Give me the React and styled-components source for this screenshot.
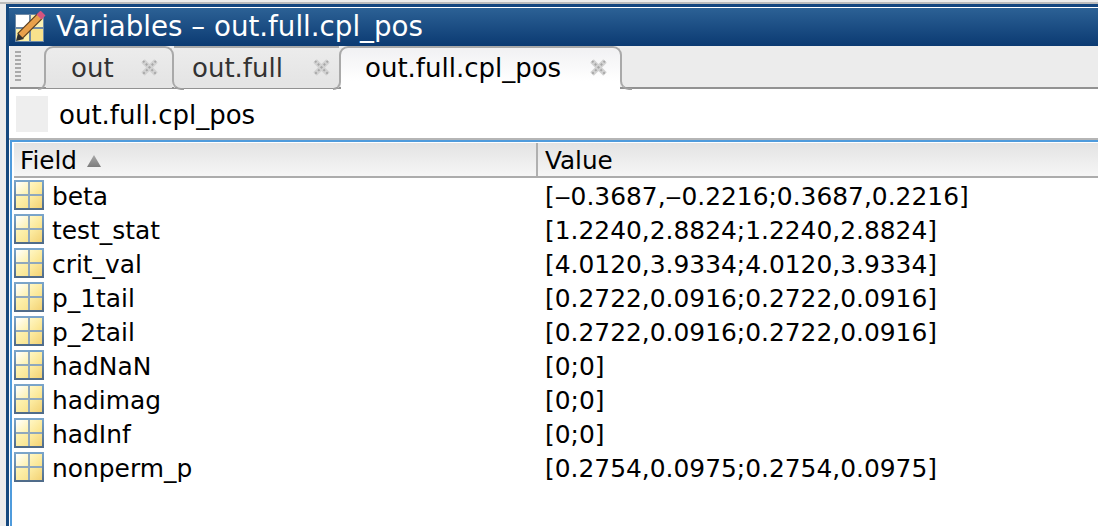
import React from "react";
import styled, { createGlobalStyle } from "styled-components";

const Global = createGlobalStyle`
  html, body {
    margin: 0;
    padding: 0;
    background: #f4f4f4;
  }
  body {
    font-family: "DejaVu Sans", "Liberation Sans", sans-serif;
  }
`;

const Frame = styled.div`
  width: 1098px;
  height: 526px;
  overflow: hidden;
  display: flex;
  background: #ececec;
  box-sizing: border-box;
  padding: 2px 0 0 6px;
`;

const Main = styled.div`
  flex: 1;
  min-width: 0;
  display: flex;
  flex-direction: column;
  background: #fff;
  border-left: 3px solid #16497f;
`;

const TopEdge = styled.div`
  height: 2px;
  flex: none;
  margin-left: -9px;
  background: #bcbcbc;
`;

const TitleBar = styled.div`
  height: 42px;
  flex: none;
  box-sizing: border-box;
  border-top: 3px solid #12457f;
  display: flex;
  align-items: center;
  gap: 10px;
  padding: 0 0 0 5px;
  color: #fff;
  font-size: 27.7px;
  white-space: nowrap;
  background: linear-gradient(#fff 0 1px, #2c6195 1px, #0b3a72 100%);
`;

const TabBar = styled.div`
  height: 43px;
  flex: none;
  margin-left: 1px;
  box-sizing: border-box;
  display: flex;
  align-items: flex-start;
  background: #ececec;
  border-bottom: 2px solid #929292;
`;

const Grip = styled.div`
  width: 6px;
  height: 30px;
  margin: 5px 23px 0 5px;
  background: repeating-linear-gradient(#aaaaaa 0 2px, #ececec 2px 4px);
`;

const Tab = styled.div`
  position: relative;
  width: ${(p) => p.$w}px;
  height: 35px;
  box-sizing: border-box;
  display: flex;
  align-items: center;
  justify-content: space-between;
  padding: 6px ${(p) => p.$pr}px 0 ${(p) => p.$pl}px;
  font-size: 26px;
  white-space: nowrap;
  color: ${(p) => (p.$active ? "#000" : "#333")};
  border-top: 2px solid #a9a9a9;
  border-left: ${(p) => (p.$flareLeft ? "2px solid #a9a9a9" : "none")};
  border-right: ${(p) => (p.$flareRight ? "2px solid #a9a9a9" : "none")};
  border-radius: ${(p) => (p.$flareLeft ? "9px" : "0")} ${(p) => (p.$flareRight ? "9px" : "0")} 0 0;
  background: ${(p) =>
    p.$active
      ? "linear-gradient(#f1f1f3, #ffffff)"
      : "linear-gradient(#ececec, #e5e5e5)"};

  &::before {
    content: "";
    position: absolute;
    left: 0;
    right: 0;
    top: 100%;
    height: ${(p) => (p.$active ? 9 : 7)}px;
    background: ${(p) => (p.$active ? "#ffffff" : "#e5e5e5")};
  }

  &::after {
    content: "";
    display: ${(p) => (p.$flareRight ? "block" : "none")};
    position: absolute;
    z-index: 2;
    left: 100%;
    top: 100%;
    width: 12px;
    height: 9px;
    box-sizing: border-box;
    border-left: 2px solid #a9a9a9;
    border-bottom: 2px solid #a0a0a0;
    border-bottom-left-radius: 9px;
  }
`;

const TabLabel = styled.span`
  position: relative;
  z-index: 1;
`;

const LeftFlare = styled.span`
  position: absolute;
  z-index: 2;
  right: 100%;
  top: 100%;
  width: 8px;
  height: 9px;
  box-sizing: border-box;
  border-right: 2px solid #a9a9a9;
  border-bottom: 2px solid #a0a0a0;
  border-bottom-right-radius: 8px;
`;

const Toolbar = styled.div`
  height: 51px;
  flex: none;
  box-sizing: border-box;
  display: flex;
  align-items: center;
  gap: 11px;
  padding: 0 0 0 7px;
  font-size: 26px;
  color: #000;
  border-bottom: 2px solid #b5b5b5;
`;

const Swatch = styled.div`
  width: 32px;
  height: 36px;
  background: #eeeeee;
`;

const ToolbarLabel = styled.span`
  padding-top: 2px;
`;

const TablePanel = styled.div`
  flex: 1;
  margin-left: 1px;
  padding: 1px 0 0 2px;
  border-top: 2px solid #4f9bdc;
  border-left: 2px solid #4f9bdc;
`;

const HeaderRow = styled.div`
  height: 35px;
  box-sizing: border-box;
  display: grid;
  grid-template-columns: 522px 1fr;
  background: linear-gradient(#e3e3e3, #f6f6f6);
  border-bottom: 2px solid #acacac;
  font-size: 24.7px;
  color: #000;
`;

const HeaderCell = styled.div`
  display: flex;
  align-items: center;
  gap: 10px;
  padding-top: 2px;
  padding-left: ${(p) => p.$pl}px;
  border-left: ${(p) => (p.$sep ? "2px solid #b0b0b0" : "none")};
`;

const Row = styled.div`
  height: 34px;
  display: grid;
  grid-template-columns: 531px 1fr;
  align-items: center;
  font-size: 24.9px;
  color: #000;
`;

const FieldCell = styled.div`
  display: flex;
  align-items: center;
  gap: 8px;
`;

const FieldName = styled.span`
  padding-top: 3px;
`;

const ValueCell = styled.div`
  padding-top: 3px;
  white-space: nowrap;
`;

const CloseIcon = () => (
  <svg width="19" height="19" viewBox="0 0 19 19">
    <path d="M3 3 L16 16 M16 3 L3 16" stroke="#d2d2d2" strokeWidth="5" />
    <path d="M3 3 L16 16 M16 3 L3 16" stroke="#a8a8a8" strokeWidth="2" strokeDasharray="2 2" />
  </svg>
);

const SortIcon = () => (
  <svg width="14" height="12" viewBox="0 0 14 12">
    <defs>
      <linearGradient id="sortFill" x1="0" y1="0" x2="0" y2="1">
        <stop offset="0" stopColor="#a8a8a8" />
        <stop offset="1" stopColor="#7c7c7c" />
      </linearGradient>
    </defs>
    <path d="M7 0 L14 12 H0 Z" fill="url(#sortFill)" />
  </svg>
);

const StructIcon = () => (
  <svg width="30" height="30" viewBox="0 0 30 30">
    <defs>
      <linearGradient id="edge" x1="0" y1="0" x2="0" y2="1">
        <stop offset="0" stopColor="#7ba6cc" />
        <stop offset="1" stopColor="#4e6a88" />
      </linearGradient>
      <linearGradient id="cellA" x1="0" y1="0" x2="1" y2="1">
        <stop offset="0" stopColor="#ffffff" />
        <stop offset="1" stopColor="#fdf1ad" />
      </linearGradient>
      <linearGradient id="cellB" x1="0" y1="0" x2="1" y2="1">
        <stop offset="0" stopColor="#fff7c4" />
        <stop offset="1" stopColor="#fbe389" />
      </linearGradient>
      <linearGradient id="cellC" x1="0" y1="0" x2="1" y2="1">
        <stop offset="0" stopColor="#fef4b6" />
        <stop offset="1" stopColor="#f9e491" />
      </linearGradient>
      <linearGradient id="cellD" x1="0" y1="0" x2="1" y2="1">
        <stop offset="0" stopColor="#fdeea6" />
        <stop offset="1" stopColor="#f3d274" />
      </linearGradient>
    </defs>
    <rect width="30" height="30" fill="url(#edge)" />
    <rect x="2" y="2" width="26" height="26" fill="#8fa8bd" />
    <rect x="2" y="2" width="12" height="12" fill="url(#cellA)" />
    <rect x="16" y="2" width="12" height="12" fill="url(#cellB)" />
    <rect x="2" y="16" width="12" height="12" fill="url(#cellC)" />
    <rect x="16" y="16" width="12" height="12" fill="url(#cellD)" />
  </svg>
);

const VariablesIcon = () => (
  <svg width="32" height="32" viewBox="0 0 32 32">
    <rect x="1" y="3" width="29" height="28" fill="#6f8aa6" />
    <rect x="2" y="4" width="13" height="12" fill="#ffffff" />
    <rect x="17" y="4" width="12" height="12" fill="#fdf3b4" />
    <rect x="2" y="18" width="13" height="12" fill="#fdf0a8" />
    <rect x="17" y="18" width="12" height="12" fill="#f8e28c" />
    <path d="M6 25 L26 5" stroke="#5a3d1c" strokeWidth="8" />
    <path d="M6 25 L26 5" stroke="#e8a04a" strokeWidth="5.5" />
    <path d="M25 6 L29 2" stroke="#d5557f" strokeWidth="7" />
    <path d="M2 30 L4 22 L10 28 Z" fill="#2f2f2f" />
  </svg>
);

const fields = [
  ["beta", "[‒0.3687,‒0.2216;0.3687,0.2216]"],
  ["test_stat", "[1.2240,2.8824;1.2240,2.8824]"],
  ["crit_val", "[4.0120,3.9334;4.0120,3.9334]"],
  ["p_1tail", "[0.2722,0.0916;0.2722,0.0916]"],
  ["p_2tail", "[0.2722,0.0916;0.2722,0.0916]"],
  ["hadNaN", "[0;0]"],
  ["hadimag", "[0;0]"],
  ["hadInf", "[0;0]"],
  ["nonperm_p", "[0.2754,0.0975;0.2754,0.0975]"],
];

const App = () => (
  <>
    <Global />
    <Frame>
      <Main>
        <TopEdge />
        <TitleBar>
          <VariablesIcon />
          <span>Variables – out.full.cpl_pos</span>
        </TitleBar>
        <TabBar>
          <Grip />
          <Tab $w={130} $pl={25} $pr={13} $flareLeft $flareRight>
            <LeftFlare />
            <TabLabel>out</TabLabel>
            <CloseIcon />
          </Tab>
          <Tab $w={165} $pl={18} $pr={8}>
            <TabLabel>out.full</TabLabel>
            <CloseIcon />
          </Tab>
          <Tab $w={283} $pl={24} $pr={12} $active $flareLeft $flareRight>
            <LeftFlare />
            <TabLabel>out.full.cpl_pos</TabLabel>
            <CloseIcon />
          </Tab>
        </TabBar>
        <Toolbar>
          <Swatch />
          <ToolbarLabel>out.full.cpl_pos</ToolbarLabel>
        </Toolbar>
        <TablePanel>
          <HeaderRow>
            <HeaderCell $pl={6}>
              Field
              <SortIcon />
            </HeaderCell>
            <HeaderCell $pl={7} $sep>
              Value
            </HeaderCell>
          </HeaderRow>
          {fields.map(([name, value]) => (
            <Row key={name}>
              <FieldCell>
                <StructIcon />
                <FieldName>{name}</FieldName>
              </FieldCell>
              <ValueCell>{value}</ValueCell>
            </Row>
          ))}
        </TablePanel>
      </Main>
    </Frame>
  </>
);

export default App;
